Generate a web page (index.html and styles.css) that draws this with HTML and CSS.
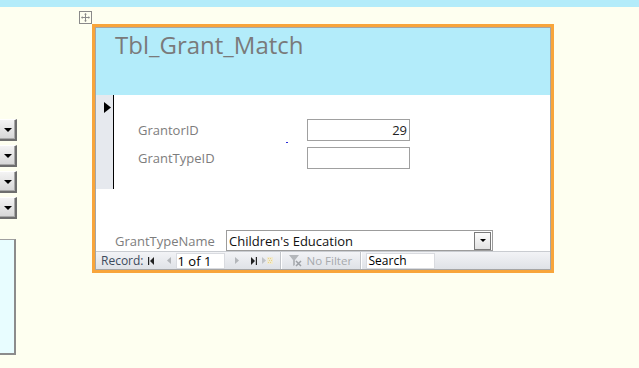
FILE: index.html
```html
<!DOCTYPE html>
<html lang="en">
<head>
  <meta charset="UTF-8" />
  <title>Tbl_Grant_Match</title>
  <link rel="stylesheet" href="styles.css">
</head>
<body>
  <div class="topbar"></div>

  <div class="workspace">
    <div class="side">
      <div class="drop-list">
        <span class="drop-btn"><i class="tri"></i></span>
        <span class="drop-btn"><i class="tri"></i></span>
        <span class="drop-btn"><i class="tri"></i></span>
        <span class="drop-btn"><i class="tri"></i></span>
      </div>
      <div class="side-panel"></div>
    </div>

    <div class="form">
      <span class="move-handle">
        <svg width="13" height="13" viewBox="0 0 13 13">
          <rect x="0.5" y="0.5" width="12" height="12" fill="none" stroke="#8a8a8a" />
          <path d="M6.5 3v7M3 6.5h7" stroke="#8a8a8a" />
          <path d="M6.5 2l-1.5 1.5h3zM6.5 11l-1.5-1.5h3zM2 6.5l1.5-1.5v3zM11 6.5l-1.5-1.5v3z" fill="#8a8a8a" />
        </svg>
      </span>

      <div class="form-header">
        <h1>Tbl_Grant_Match</h1>
      </div>

      <div class="detail">
        <div class="selector">
          <svg width="7" height="11" viewBox="0 0 7 11"><path d="M0 0l7 5.5-7 5.5z" fill="#000" /></svg>
        </div>
        <div class="fields">
          <label class="field-label">GrantorID</label>
          <div class="textbox num">29</div>
          <label class="field-label">GrantTypeID</label>
          <div class="textbox"></div>
          <span class="dot"></span>
        </div>
      </div>

      <div class="combo-row">
        <label class="field-label combo-label">GrantTypeName</label>
        <div class="combo">
          <span class="combo-text">Children's Education</span>
          <span class="combo-btn"><i class="tri"></i></span>
        </div>
      </div>

      <div class="navbar">
        <span class="nav-caption">Record:</span>
        <svg class="nav-ico first" width="6" height="8" viewBox="0 0 6 8"><path d="M0 0h1.2v8H0zM6 0v8L2 4z" fill="#222" /></svg>
        <svg class="nav-ico prev" width="4" height="7" viewBox="0 0 4 7"><path d="M4 0v7L0 3.5z" fill="#b3b6ba" /></svg>
        <span class="nav-input">1 of 1</span>
        <svg class="nav-ico next" width="4" height="7" viewBox="0 0 4 7"><path d="M0 0v7l4-3.5z" fill="#b3b6ba" /></svg>
        <svg class="nav-ico last" width="6" height="8" viewBox="0 0 6 8"><path d="M0 0v8l4-4zM4.8 0H6v8H4.8z" fill="#222" /></svg>
        <svg class="nav-ico new" width="11" height="9" viewBox="0 0 11 9">
          <path d="M0 1v7l4-3.5z" fill="#c0c3c7" />
          <path d="M5 1h6v7H5z" fill="#f1ead0" />
          <path d="M6 2h1v1H6zM8 2h1v1H8zM7 4h1v1H7zM9 4h1v1H9zM6 6h1v1H6zM8 6h1v1H8z" fill="#e6d38e" />
        </svg>
        <span class="nav-sep"></span>
        <span class="filter">
          <svg width="13" height="12" viewBox="0 0 13 12">
            <path d="M0 0h10L6 5v5L4 11V5z" fill="#b4b7bb" />
            <path d="M7 6l5 5M12 6l-5 5" stroke="#9ea2a7" stroke-width="1.5" />
          </svg>
          No Filter
        </span>
        <span class="nav-sep"></span>
        <span class="nav-search">Search</span>
      </div>
    </div>
  </div>
</body>
</html>
```

FILE: styles.css
```css
body {
  margin: 0;
  background: #fefff0;
  font-family: 'Open Sans', 'Noto Sans', sans-serif;
  height: 368px;
  overflow: hidden;
}

.topbar {
  height: 7px;
  background: #b3ecfa;
}

.workspace {
  display: flex;
  align-items: flex-start;
}

/* left strip: clipped controls of the neighbour form */
.side {
  width: 18px;
  padding-top: 112px;
}

.drop-list {
  display: flex;
  flex-direction: column;
  gap: 4px;
}

.drop-btn {
  display: flex;
  align-items: center;
  justify-content: center;
  width: 15px;
  height: 19px;
  background: linear-gradient(#f4f4f4, #d6d6d6);
  border-top: 1px solid #ffffff;
  border-right: 2px solid #6e6e6e;
  border-bottom: 2px solid #6e6e6e;
  box-shadow: inset -1px -1px 0 #a8a8a8;
}

.tri {
  width: 0;
  height: 0;
  border-left: 4px solid transparent;
  border-right: 4px solid transparent;
  border-top: 4px solid #000;
}

.side-panel {
  margin-top: 20px;
  width: 14px;
  height: 113px;
  background: #e8fdff;
  border-top: 1px solid #a0a0a0;
  border-right: 2px solid #8c8c8c;
  border-bottom: 2px solid #8c8c8c;
}

/* the form */
.form {
  position: relative;
  margin: 17px 0 0 74px;
  width: 454px;
  border: 3px solid #f8a53b;
  box-shadow: inset 0 0 0 1px #a5a5a5;
  padding: 1px;
  background: #fff;
}

.move-handle {
  position: absolute;
  left: -16px;
  top: -16px;
  width: 13px;
  height: 13px;
  display: flex;
}

.form-header {
  height: 67px;
  background: #b3ecfa;
}

.form-header h1 {
  margin: 0;
  padding: 0 0 0 19px;
  font-size: 24px;
  font-weight: 400;
  color: #7a7a7a;
  line-height: 34px;
}

.detail {
  display: flex;
  height: 94px;
}

.selector {
  width: 18px;
  box-sizing: border-box;
  border-right: 1px solid #000;
  background: #e6e9ee;
  padding: 1px 0 0 8px;
}

.fields {
  position: relative;
  display: grid;
  grid-template-columns: 169px 103px;
  grid-auto-rows: 22px;
  row-gap: 6px;
  align-items: center;
  padding: 24px 0 0 24px;
}

.field-label {
  font-size: 13px;
  color: #7d7d7d;
}

.textbox {
  height: 22px;
  box-sizing: border-box;
  border: 1px solid #a0a0a0;
  font-size: 13px;
  color: #222;
  padding: 2px 2px 0;
  line-height: 17px;
}

.textbox.num {
  text-align: right;
}

.dot {
  position: absolute;
  left: 172px;
  top: 47px;
  width: 2px;
  height: 1px;
  background: #2b2bd8;
}

.combo-row {
  display: flex;
  align-items: center;
  margin-top: 41px;
  padding-left: 19px;
  height: 21px;
}

.combo-label {
  width: 111px;
}

.combo {
  display: flex;
  align-items: center;
  justify-content: space-between;
  width: 267px;
  height: 21px;
  box-sizing: border-box;
  border: 1px solid #9c9c9c;
  padding: 0 0 0 2px;
}

.combo-text {
  font-size: 13px;
  color: #111;
}

.combo-btn {
  display: flex;
  align-items: center;
  justify-content: center;
  width: 15px;
  height: 16px;
  margin-right: 1px;
  border: 1px solid #7a7a7a;
  background: linear-gradient(#fdfdfd, #e2e2e2);
}

.combo-btn .tri {
  border-left-width: 3px;
  border-right-width: 3px;
  border-top-width: 3px;
}

/* record navigation */
.navbar {
  display: flex;
  align-items: center;
  height: 18px;
  background: linear-gradient(#f2f3f6, #dfe2e7);
  border-top: 1px solid #c9ccd1;
  box-sizing: border-box;
  font-size: 12px;
}

.nav-caption {
  margin-left: 5px;
  color: #3c4a5c;
}

.nav-ico {
  flex: none;
}

.nav-ico.first { margin-left: 4px; }
.nav-ico.prev { margin-left: 13px; }
.nav-ico.next { margin-left: 10px; }
.nav-ico.last { margin-left: 12px; }
.nav-ico.new { margin-left: 5px; }

.nav-input {
  margin-left: 5px;
  width: 49px;
  height: 16px;
  box-sizing: border-box;
  background: #fff;
  border: 1px solid #d9dbe0;
  font-size: 13px;
  line-height: 14px;
  padding-left: 1px;
  color: #000;
}

.nav-sep {
  width: 1px;
  height: 17px;
  background: #c2c5ca;
  box-shadow: 1px 0 0 #fff;
  margin-left: 7px;
}

.filter {
  display: flex;
  align-items: center;
  gap: 5px;
  margin-left: 8px;
  width: 64px;
  color: #a6a9ad;
  font-size: 11.5px;
}

.nav-search {
  margin-left: 5px;
  width: 69px;
  height: 16px;
  box-sizing: border-box;
  background: #fff;
  border: 1px solid #d9dbe0;
  font-size: 12px;
  line-height: 14px;
  padding-left: 2px;
  color: #000;
}
```
